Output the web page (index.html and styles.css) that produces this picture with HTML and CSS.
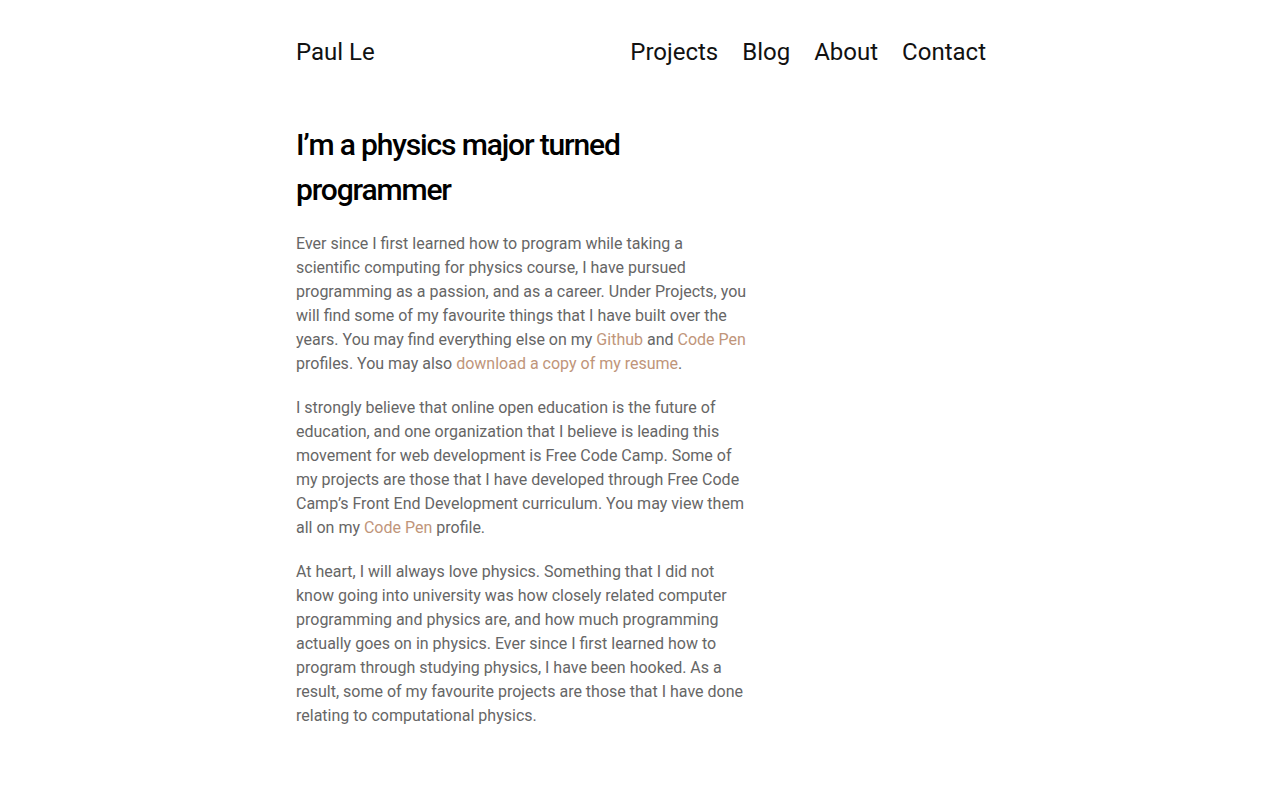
FILE: index.html
```html
<!DOCTYPE html>
<html lang="en">
<head>
<meta charset="utf-8">
<title>Paul Le</title>
<link rel="stylesheet" href="styles.css">
</head>
<body>
<div class="page">
  <header class="site-header">
    <a class="brand" href="#">Paul Le</a>
    <nav class="nav">
      <a href="#">Projects</a>
      <a href="#">Blog</a>
      <a href="#">About</a>
      <a href="#">Contact</a>
    </nav>
  </header>
  <main class="content">
    <h1 class="title">I’m a physics major turned programmer</h1>
    <p>Ever since I first learned how to program while taking a scientific computing for physics course, I have pursued programming as a passion, and as a career. Under Projects, you will find some of my favourite things that I have built over the years. You may find everything else on my <a href="#">Github</a> and <a href="#">Code Pen</a> profiles. You may also <a href="#">download a copy of my resume</a>.</p>
    <p>I strongly believe that online open education is the future of education, and one organization that I believe is leading this movement for web development is Free Code Camp. Some of my projects are those that I have developed through Free Code Camp’s Front End Development curriculum. You may view them all on my <a href="#">Code Pen</a> profile.</p>
    <p>At heart, I will always love physics. Something that I did not know going into university was how closely related computer programming and physics are, and how much programming actually goes on in physics. Ever since I first learned how to program through studying physics, I have been hooked. As a result, some of my favourite projects are those that I have done relating to computational physics.</p>
  </main>
</div>
</body>
</html>
```
FILE: styles.css
```css
* { box-sizing: border-box; }
body {
  margin: 0;
  background: #fff;
  font-family: Roboto, "Liberation Sans", sans-serif;
  color: #666;
}
.page {
  max-width: 692px;
  margin: 0 auto;
  padding: 35px 0 0 2px;
}
.site-header {
  display: flex;
  justify-content: space-between;
  align-items: center;
}
.site-header a {
  color: #111;
  text-decoration: none;
  font-size: 24px;
  line-height: 34px;
}
.nav {
  display: flex;
  gap: 24px;
}
.content {
  width: 452px;
  padding-top: 53px;
}
.title {
  margin: 0 0 20px;
  font-size: 30px;
  line-height: 45px;
  font-weight: 500;
  letter-spacing: -1.15px;
  color: #000;
}
.content p {
  margin: 0 0 20px;
  font-size: 16px;
  line-height: 24px;
}
.content p a {
  color: #c0957a;
  text-decoration: none;
}
```
